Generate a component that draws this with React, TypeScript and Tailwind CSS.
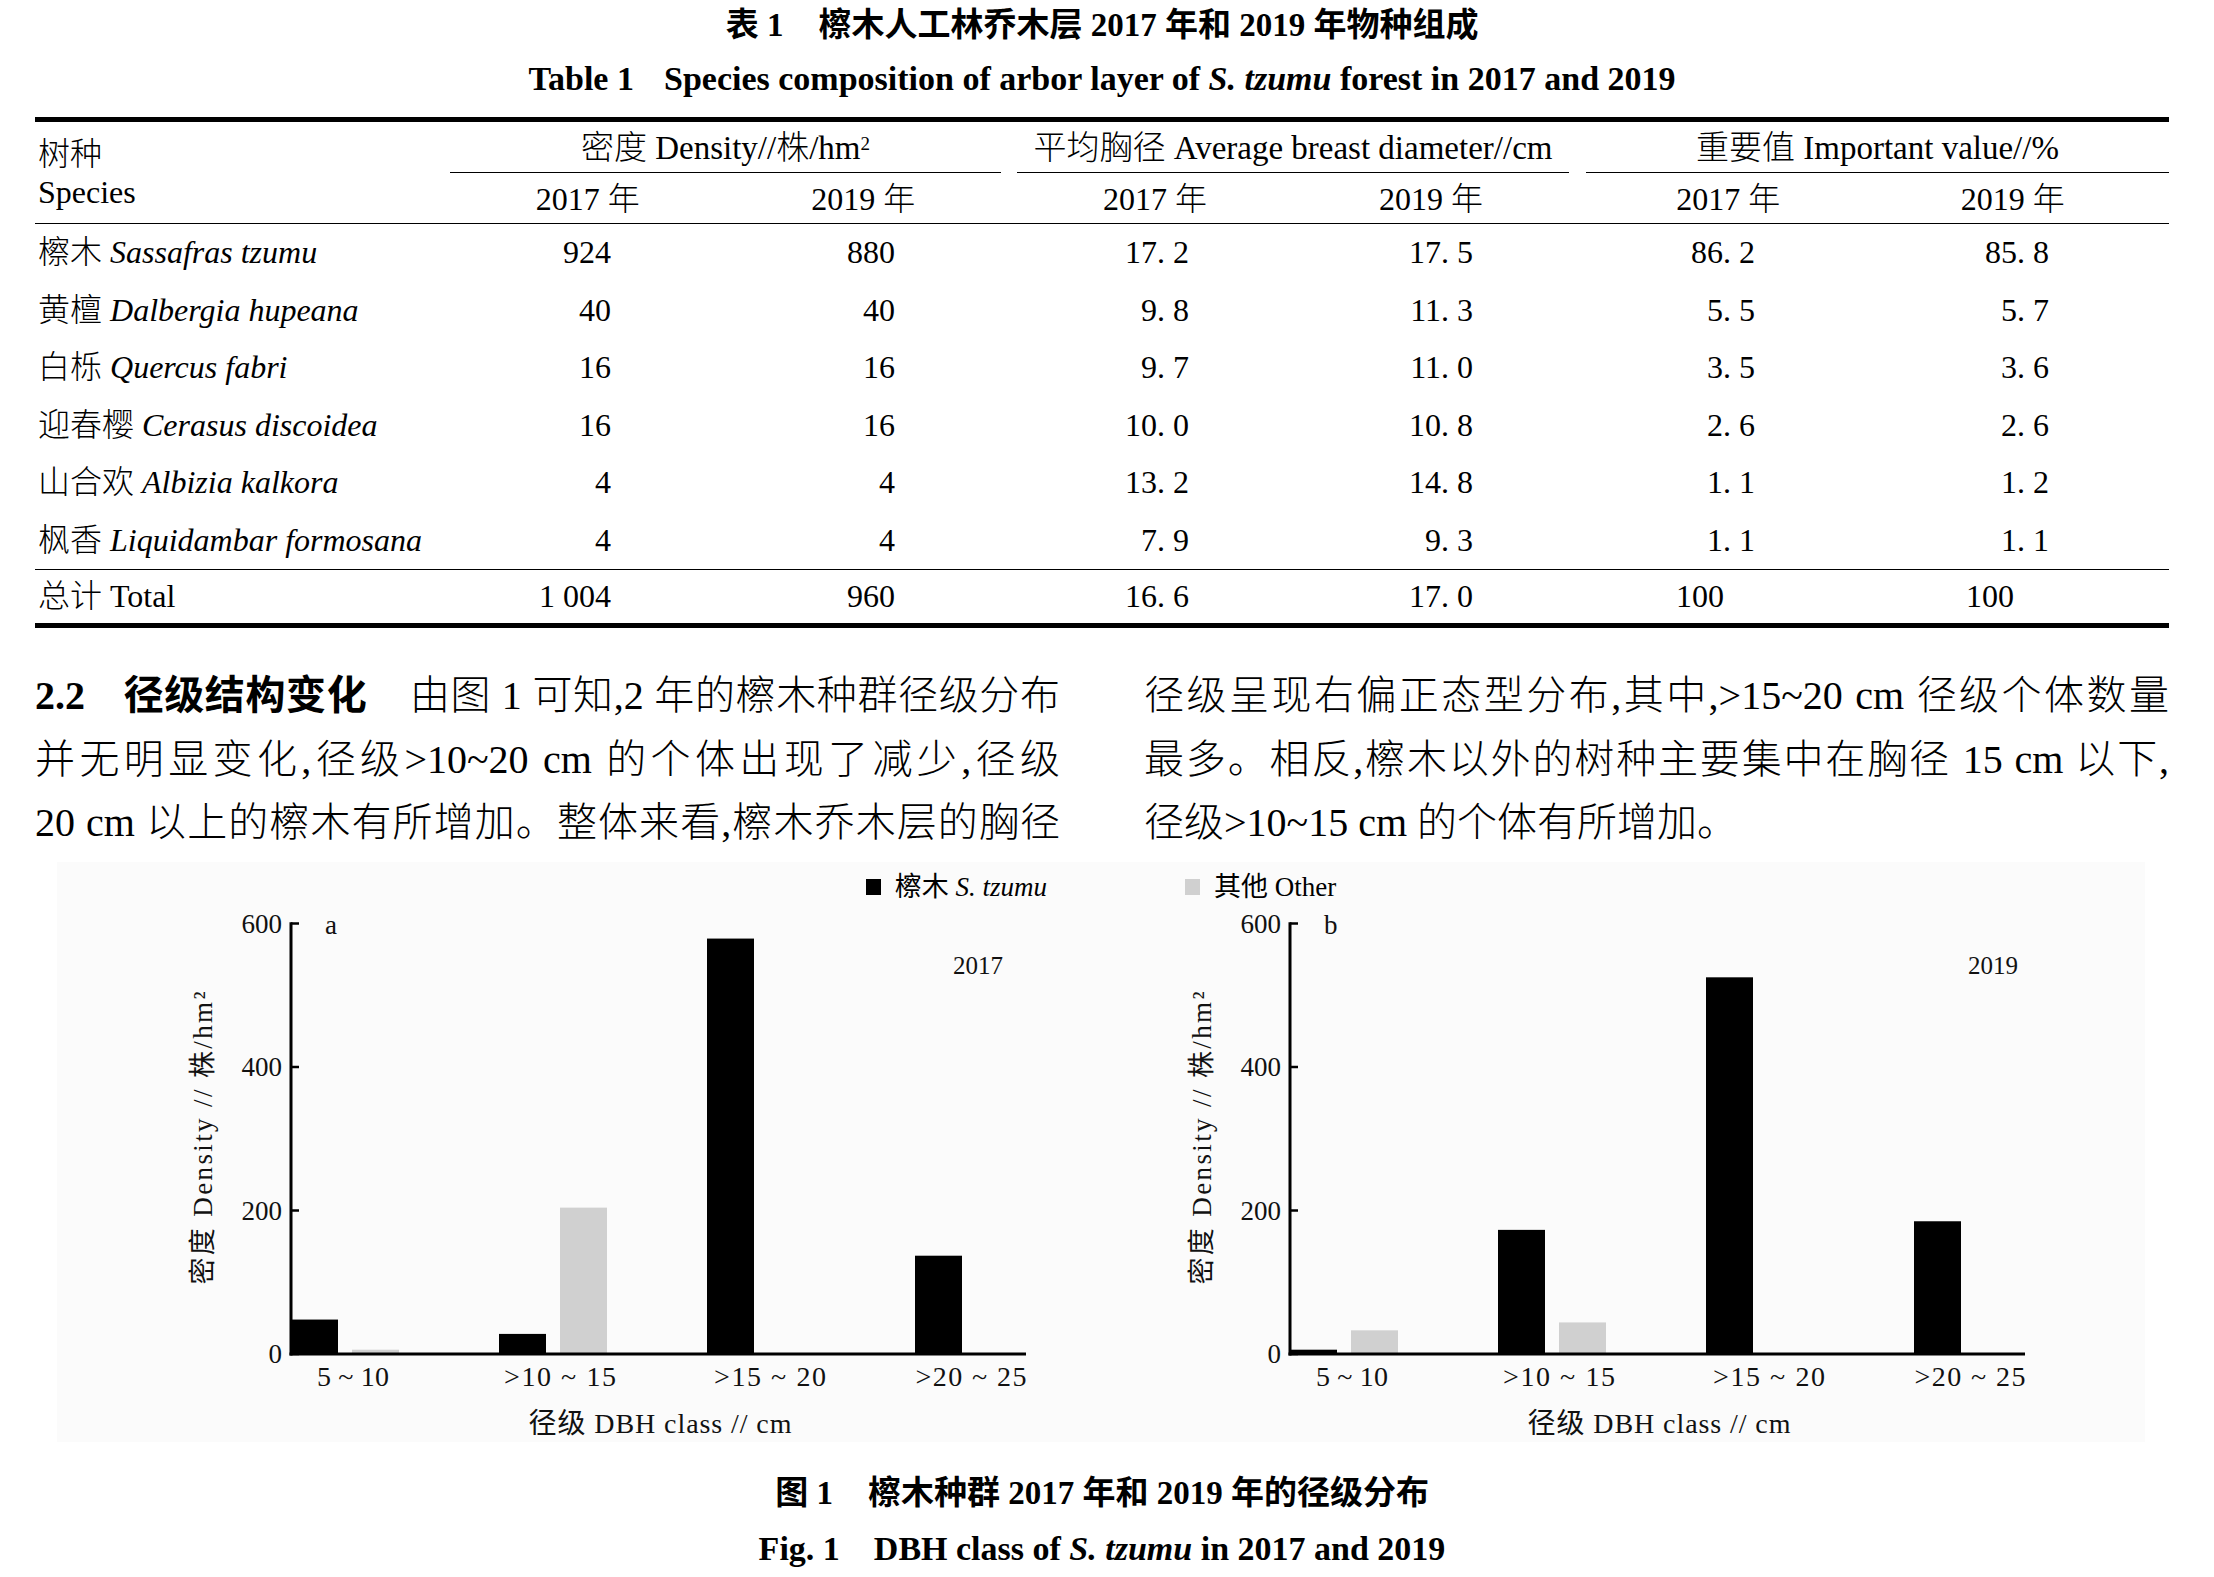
import React from 'react';

const rows = [
  { cn: '檫木', la: 'Sassafras tzumu', v: ['924', '880', '17. 2', '17. 5', '86. 2', '85. 8'] },
  { cn: '黄檀', la: 'Dalbergia hupeana', v: ['40', '40', '9. 8', '11. 3', '5. 5', '5. 7'] },
  { cn: '白栎', la: 'Quercus fabri', v: ['16', '16', '9. 7', '11. 0', '3. 5', '3. 6'] },
  { cn: '迎春樱', la: 'Cerasus discoidea', v: ['16', '16', '10. 0', '10. 8', '2. 6', '2. 6'] },
  { cn: '山合欢', la: 'Albizia kalkora', v: ['4', '4', '13. 2', '14. 8', '1. 1', '1. 2'] },
  { cn: '枫香', la: 'Liquidambar formosana', v: ['4', '4', '7. 9', '9. 3', '1. 1', '1. 1'] },
];
const total = ['1 004', '960', '16. 6', '17. 0', '100', '100'];

// value columns: width + right padding so the decimals line up
const cellPad = [
  'w-[275px] pr-[114px]',
  'w-[284px] pr-[114px]',
  'w-[284px] pr-[104px]',
  'w-[284px] pr-[104px]',
  'w-[300px] pr-[122px]',
  'w-[292px] pr-[120px]',
];
const intPad = ['', '', '', '', 'w-[300px] pr-[153px]', 'w-[292px] pr-[155px]'];

const padFor = (value: string, i: number) =>
  i >= 4 && !value.includes('.') ? intPad[i] : cellPad[i];

const DataRow = ({ cn, la, v }: { cn: string; la: string; v: string[] }) => (
  <div className="flex h-[57.5px] leading-[57.5px]">
    <div className="w-[415px] pl-[3px] whitespace-nowrap">
      {cn} <i>{la}</i>
    </div>
    {v.map((value, i) => (
      <div key={i} className={`${padFor(value, i)} text-right whitespace-nowrap`}>
        {value}
      </div>
    ))}
  </div>
);

const SpeciesTable = () => (
  <div className="text-[32px] font-light">
    <div className="h-[5px] bg-black" />
    <div className="flex h-[101px]">
      <div className="w-[415px] pl-[3px] pt-[15px] leading-[34px]">
        <div>树种</div>
        <div className="mt-[4px]">Species</div>
      </div>
      <div className="w-[559px]">
        <div className="mr-[8px] h-[50px] pt-[6px] leading-[40px] text-center text-[33px] whitespace-nowrap">
          密度 Density//株/hm<sup className="text-[19px]">2</sup>
        </div>
        <div className="mr-[8px] h-px bg-black" />
        <div className="mr-[8px] flex h-[50px] pt-[6px] leading-[40px]">
          <div className="flex-1 text-center">2017 年</div>
          <div className="flex-1 text-center">2019 年</div>
        </div>
      </div>
      <div className="w-[568px]">
        <div className="mx-[8px] h-[50px] pt-[6px] leading-[40px] text-center text-[33px] whitespace-nowrap">
          平均胸径 Average breast diameter//cm
        </div>
        <div className="mx-[8px] h-px bg-black" />
        <div className="mx-[8px] flex h-[50px] pt-[6px] leading-[40px]">
          <div className="flex-1 text-center">2017 年</div>
          <div className="flex-1 text-center">2019 年</div>
        </div>
      </div>
      <div className="w-[592px]">
        <div className="ml-[9px] h-[50px] pt-[6px] leading-[40px] text-center text-[33px] whitespace-nowrap">
          重要值 Important value//%
        </div>
        <div className="ml-[9px] h-px bg-black" />
        <div className="ml-[9px] mr-[14px] flex h-[50px] pt-[6px] leading-[40px]">
          <div className="flex-1 text-center">2017 年</div>
          <div className="flex-1 text-center">2019 年</div>
        </div>
      </div>
    </div>
    <div className="h-px bg-black" />
    {rows.map((r) => (
      <DataRow key={r.cn} {...r} />
    ))}
    <div className="h-px bg-black" />
    <div className="flex h-[53px] leading-[53px]">
      <div className="w-[415px] pl-[3px]">总计 Total</div>
      {total.map((value, i) => (
        <div key={i} className={`${padFor(value, i)} text-right whitespace-nowrap`}>
          {value}
        </div>
      ))}
    </div>
    <div className="h-[5px] bg-black" />
  </div>
);

const Paragraph = () => (
  <div className="mt-[36px] grid grid-cols-2 gap-x-[84px] text-[40px] leading-[63.5px] font-light">
    <div>
      <div className="text-justify [text-align-last:justify]">
        <span className="font-bold">2.2</span>
        <span className="inline-block w-[38px]" />
        <span className="font-bold">径级结构变化</span>
        <span className="inline-block w-[42px]" />
        由图 1 可知,2 年的檫木种群径级分布
      </div>
      <div className="text-justify [text-align-last:justify]">
        并无明显变化,径级&gt;10~20 cm 的个体出现了减少,径级
      </div>
      <div className="text-justify [text-align-last:justify]">
        20 cm 以上的檫木有所增加。整体来看,檫木乔木层的胸径
      </div>
    </div>
    <div>
      <div className="text-justify [text-align-last:justify]">
        径级呈现右偏正态型分布,其中,&gt;15~20 cm 径级个体数量
      </div>
      <div className="text-justify [text-align-last:justify]">
        最多。相反,檫木以外的树种主要集中在胸径 15 cm 以下,
      </div>
      <div className="whitespace-nowrap">径级&gt;10~15 cm 的个体有所增加。</div>
    </div>
  </div>
);

type ChartProps = {
  tag: string;
  year: string;
  yearX: number;
  black: number[];
  gray: number[];
};

const Chart = ({ tag, year, yearX, black, gray }: ChartProps) => {
  const base = 448;
  const k = 0.7175; // px per plant/hm2
  const slots = [181, 389, 597, 805];
  const labels = ['5 ~ 10', '>10 ~ 15', '>15 ~ 20', '>20 ~ 25'];
  const labelX = [243, 450, 660, 861];
  const labelW = [72, 112, 112, 111];
  const ticks = [0, 200, 400, 600];
  return (
    <svg
      width="960"
      height="536"
      viewBox="0 0 960 536"
      className="block shrink-0 font-['Liberation_Serif','Noto_Sans_CJK_SC',serif]"
    >
      {slots.map((x, i) => (
        <g key={i}>
          {black[i] > 0 && (
            <rect x={x} y={base - black[i] * k} width="47" height={black[i] * k} fill="#000" />
          )}
          {gray[i] > 0 && (
            <rect x={x + 61} y={base - gray[i] * k} width="47" height={gray[i] * k} fill="#d0d0d0" />
          )}
        </g>
      ))}
      <line x1="181" y1={base - 431.7} x2="181" y2={base + 1.5} stroke="#000" strokeWidth="3" />
      <line x1="179.5" y1={base} x2="916" y2={base} stroke="#000" strokeWidth="3" />
      {ticks.map((t) => {
        const y = base - t * k;
        return (
          <g key={t}>
            <line x1="181" y1={y} x2="189" y2={y} stroke="#000" strokeWidth="2.5" />
            <text x="172" y={y + 9} textAnchor="end" fontSize="27" fill="#111">
              {t}
            </text>
          </g>
        );
      })}
      <text x="215" y="28" fontSize="27" fill="#111">
        {tag}
      </text>
      <text x={yearX} y="67.5" fontSize="25" fill="#111">
        {year}
      </text>
      {labels.map((l, i) => (
        <text
          key={l}
          x={labelX[i]}
          y="480"
          fontSize="28"
          textAnchor="middle"
          textLength={labelW[i]}
          lengthAdjust="spacing"
          fill="#111"
        >
          {l}
        </text>
      ))}
      <text
        x="550"
        y="527"
        fontSize="28"
        textAnchor="middle"
        textLength="263"
        lengthAdjust="spacing"
        fill="#111"
      >
        径级 DBH class // cm
      </text>
      <g transform="translate(92 232) rotate(-90)">
        <text
          x="0"
          y="10"
          fontSize="27"
          textAnchor="middle"
          textLength="293"
          lengthAdjust="spacing"
          fill="#111"
        >
          密度 Density // 株/hm²
        </text>
      </g>
    </svg>
  );
};

const Figure = () => (
  <div className="ml-[22px] mt-[7.5px] h-[580px] w-[2088px] bg-[#fbfbfb]">
    <div className="flex h-[44px] items-end justify-center gap-[138px] pb-[1px] text-[27px] leading-[36px]">
      <div className="flex items-center gap-[14px]">
        <span className="h-[16px] w-[15px] bg-black" />
        <span>
          檫木 <i>S. tzumu</i>
        </span>
      </div>
      <div className="flex items-center gap-[14px]">
        <span className="h-[16px] w-[15px] bg-[#d0d0d0]" />
        <span>其他 Other</span>
      </div>
    </div>
    <div className="flex gap-[38.5px] pl-[53px]">
      <Chart tag="a" year="2017" yearX={843} black={[48, 28, 579, 137]} gray={[6, 204, 0, 0]} />
      <Chart tag="b" year="2019" yearX={859} black={[6, 173, 525, 185]} gray={[33, 44, 0, 0]} />
    </div>
  </div>
);

export default function App() {
  return (
    <div className="h-[1577px] w-[2214px] overflow-hidden bg-white text-black font-['Liberation_Serif','Noto_Sans_CJK_SC',serif]">
      <div className="w-[2169px] pl-[35px]">
        {/* table caption */}
        <div className="h-[50px] whitespace-nowrap text-center text-[33px] font-bold leading-[50px]">
          表 1<span className="inline-block w-[35px]" />
          檫木人工林乔木层 2017 年和 2019 年物种组成
        </div>
        <div className="mt-[4px] h-[50px] whitespace-nowrap text-center text-[34px] font-bold leading-[50px]">
          Table 1<span className="inline-block w-[30px]" />
          Species composition of arbor layer of <i>S. tzumu</i> forest in 2017 and 2019
        </div>
        <div className="mt-[13px]">
          <SpeciesTable />
        </div>
        <Paragraph />
        <Figure />
        {/* figure caption */}
        <div className="mt-[23px] h-[56px] whitespace-nowrap text-center text-[33px] font-bold leading-[56px]">
          图 1<span className="inline-block w-[35px]" />
          檫木种群 2017 年和 2019 年的径级分布
        </div>
        <div className="h-[56px] whitespace-nowrap text-center text-[34px] font-bold leading-[56px]">
          Fig. 1<span className="inline-block w-[34px]" />
          DBH class of <i>S. tzumu</i> in 2017 and 2019
        </div>
      </div>
    </div>
  );
}
